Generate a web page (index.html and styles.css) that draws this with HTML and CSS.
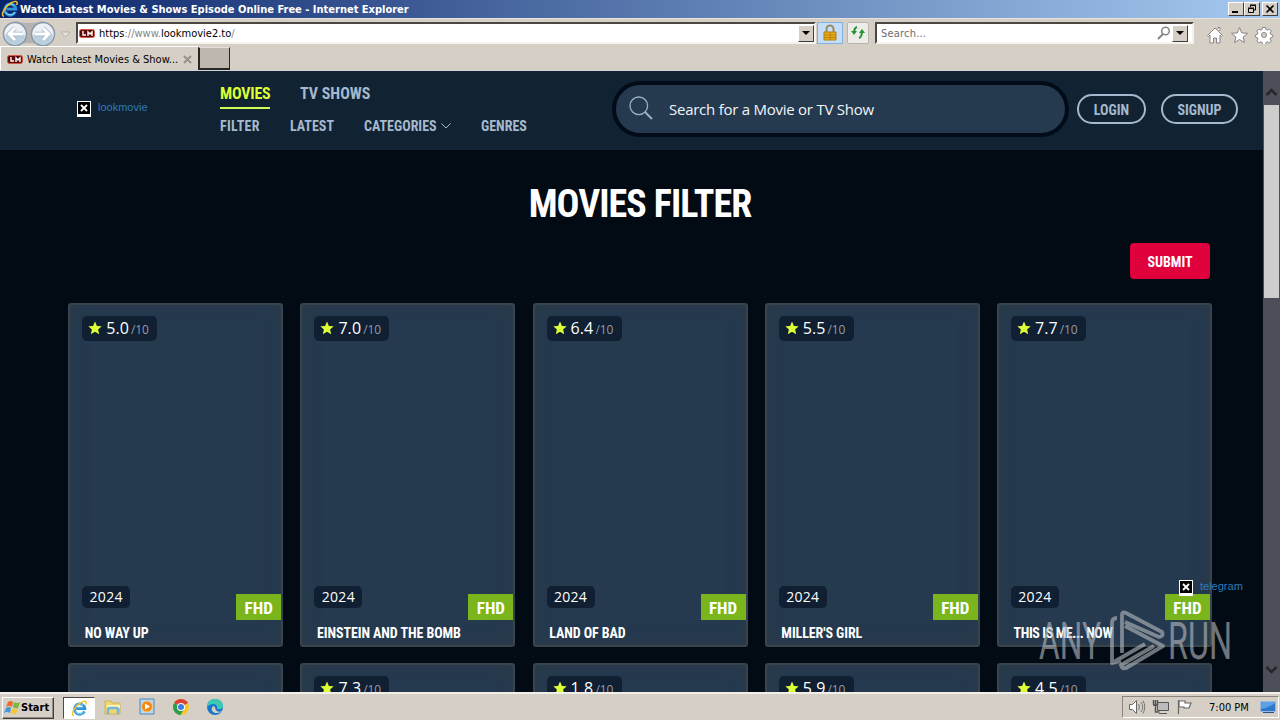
FILE: index.html
```
<!DOCTYPE html>
<html lang="en">
<head>
    <meta charset="UTF-8">
    <meta name="viewport" content="width=device-width, initial-scale=1.0">
    <title>Watch Latest Movies &amp; Shows Episode Online Free</title>
    <link rel="stylesheet" href="styles.css">
</head>
<body>
    <!-- shared icons -->
    <svg class="defs">
        <symbol id="ie" viewBox="0 0 18 18">
            <path d="M14.3 12A5.600 5.600 0 1 1 14.800 9.200H5.500" fill="none" stroke="#2f95dc" stroke-width="2.800"/>
            <path d="M13.800 12A5.200 5.200 0 0 1 4.500 12M5 6.500a5 5 0 0 1 8-1" fill="none" stroke="#8fe0fa"/>
            <path d="M3 16.500C-1 15.500 3.500 7 10 3c5-3 7.500-1.500 5.500 2" fill="none" stroke="#f0c32c" stroke-width="1.500"/>
        </symbol>
        <symbol id="lm" viewBox="0 0 16 9">
            <rect x=".5" y=".5" width="15" height="8" rx="2" fill="#5b0b0b" stroke="#d5573e"/>
            <path d="M4 2v4h3M9 7V3l2 2 2-2v4" fill="none" stroke="#fff" stroke-width="1.4"/>
        </symbol>
        <symbol id="star" viewBox="0 0 14 14">
            <path d="M7 .4l1.9 4.5 4.8.4-3.6 3.2 1.1 4.8L7 10.8l-4.2 2.5 1.1-4.8L.3 5.3l4.8-.4z" fill="#dcff36"/>
        </symbol>
        <symbol id="broken" viewBox="0 0 14 16">
            <path d="M0 0h14v16H0z" fill="#fff"/><path d="M1 1h12v12H1z" fill="#000"/>
            <path d="M4 4l6 6M10 4l-6 6" stroke="#fff" stroke-width="1.8"/>
        </symbol>
    </svg>

    <div class="titlebar">
        <svg class="title-icon"><use href="#ie"/></svg>
        <span class="title-text">Watch Latest Movies &amp; Shows Episode Online Free - Internet Explorer</span>
        <div class="window-buttons">
            <span class="win"><svg viewBox="0 0 14 12"><path d="M3 9h6" stroke="#000" stroke-width="2"/></svg></span>
            <span class="win"><svg viewBox="0 0 14 12"><path d="M5.500 4V2.500h5v4.500H9M3.500 5.500h5v4h-5zM5 2h6M3 5h6" fill="none" stroke="#000"/></svg></span>
            <span class="win close"><svg viewBox="0 0 14 12"><path d="M3.500 2.500l7 7M10.500 2.500l-7 7" stroke="#000" stroke-width="1.700"/></svg></span>
        </div>
    </div>

    <div class="toolbar">
        <svg class="nav-buttons" viewBox="0 0 72 28">
            <path d="M15 2q13 4 28 0v24q-14-4-28 0z" fill="#b5b3b2"/>
            <g fill="#edf1f5" stroke="#8897a6" stroke-width="1.500"><circle cx="15" cy="15" r="11.500"/><circle cx="43" cy="15" r="11.500"/></g>
            <g fill="#b9cfe0"><path d="M5 16a10 10 0 0 0 20 0q-10-4-20 0z"/><path d="M33 16a10 10 0 0 0 20 0q-10-4-20 0z"/></g>
            <g fill="none" stroke="#a2b3c3" stroke-width="4.500"><path d="M23 15H9M15 9l-6 6 6 6M35 15h14M43 9l6 6-6 6"/></g>
            <g fill="none" stroke="#fff" stroke-width="3"><path d="M23 15H9M15 9l-6 6 6 6M35 15h14M43 9l6 6-6 6"/></g>
            <path d="M61 13h9l-4.500 5z" fill="#e6e2dc" stroke="#b7b2ab"/>
        </svg>
        <div class="address">
            <svg class="favicon"><use href="#lm"/></svg>
            <span class="url">https<i>://www.</i>lookmovie2.to<i>/</i></span>
            <span class="drop"></span>
        </div>
        <div class="lock"><svg viewBox="0 0 16 18"><path d="M4.500 9V5a3.500 3.500 0 0 1 7 0v4" fill="none" stroke="#9b8a68" stroke-width="2"/><path d="M2 8h12v8H2z" fill="#e9ad1c" stroke="#b57c0b"/><path d="M2 11h12M2 13.500h12M8 8v8" stroke="#bb8010"/></svg></div>
        <div class="refresh"><svg viewBox="0 0 16 16"><path d="M7 2q-3 1-3 6M9 13q3-1 3-7" fill="none" stroke="#269332" stroke-width="2"/><path d="M1 6h6l-3 4zM9 8h6l-3-4z" fill="#269332"/></svg></div>
        <div class="search-box">
            <span>Search...</span>
            <svg viewBox="0 0 14 14"><circle cx="8.500" cy="5" r="3.800" fill="none" stroke="#858585" stroke-width="1.500"/><path d="M6 8l-5 5" stroke="#858585" stroke-width="2"/></svg>
            <span class="drop"></span>
        </div>
        <svg class="commands" viewBox="0 0 68 18" fill="#fff" stroke="#858585">
            <path d="M1.500 9.500L9 2l7.500 7.500-1 1-1.500-1.500V17H10.500v-5h-3v5H4V9l-1.500 1.500zM12 3V1.500h2V5"/>
            <path d="M33.500 1.500l2.200 5.400 5.800.4-4.400 3.700 1.400 5.600-5-3.100-5 3.100 1.400-5.600-4.400-3.700 5.800-.4z"/>
            <g transform="translate(58 9)"><path d="M-1.500-7.500h3l.5 2 1.500.7 1.900-1.100 1.900 1.900-1.100 1.900.6 1.500 2 .6v2l-2 .6-.6 1.500 1.100 1.900-1.900 1.900-1.900-1.100-1.400.7-.5 2h-3l-.5-2-1.500-.7-1.900 1.100-1.900-1.900 1.100-1.900-.6-1.500-2-.6V0l2-.6.6-1.500L-7.200-4l1.900-1.900 1.900 1.100 1.400-.7z"/><circle r="2.500" fill="#d6cfc6"/></g>
        </svg>
    </div>

    <div class="tabs">
        <div class="tab">
            <svg class="favicon"><use href="#lm"/></svg>
            <span>Watch Latest Movies &amp; Show...</span>
            <svg class="tab-close" viewBox="0 0 9 9"><path d="M1 1l7 7M8 1L1 8" stroke="#96918b" stroke-width="2"/></svg>
        </div>
        <div class="new-tab"></div>
    </div>

    <div class="viewport">
        <div class="site">
            <header>
                <a class="logo"><svg><use href="#broken"/></svg>lookmovie</a>
                <nav>
                    <div class="menu-main">
                        <a class="active">MOVIES</a>
                        <a class="tv">TV SHOWS</a>
                    </div>
                    <div class="menu-sub">
                        <a class="m1">FILTER</a>
                        <a class="m2">LATEST</a>
                        <a class="m3">CATEGORIES</a>
                        <svg viewBox="0 0 10 6"><path d="M.5.5L5 5 9.500.5" fill="none" stroke="#a5b9ce"/></svg>
                        <a class="m4">GENRES</a>
                    </div>
                </nav>
                <div class="search">
                    <svg viewBox="0 0 24 24" fill="none" stroke="#9db0c6"><circle cx="9.800" cy="9.800" r="8.800" stroke-width="1.300"/><path d="M16 16l7 7" stroke-width="2"/></svg>
                    <span>Search for a Movie or TV Show</span>
                </div>
                <a class="pill login">LOGIN</a>
                <a class="pill signup">SIGNUP</a>
            </header>

            <main>
                <h1><span>MOVIES FILTER</span></h1>
                <div class="actions"><button>SUBMIT</button></div>
                <div class="movies">
                    <div class="card">
                        <div class="rate"><svg><use href="#star"/></svg><b>5.0</b><small>/10</small></div>
                        <div class="year">2024</div>
                        <div class="quality">FHD</div>
                        <h6>NO WAY UP</h6>
                    </div>
                    <div class="card">
                        <div class="rate"><svg><use href="#star"/></svg><b>7.0</b><small>/10</small></div>
                        <div class="year">2024</div>
                        <div class="quality">FHD</div>
                        <h6>EINSTEIN AND THE BOMB</h6>
                    </div>
                    <div class="card">
                        <div class="rate"><svg><use href="#star"/></svg><b>6.4</b><small>/10</small></div>
                        <div class="year">2024</div>
                        <div class="quality">FHD</div>
                        <h6>LAND OF BAD</h6>
                    </div>
                    <div class="card">
                        <div class="rate"><svg><use href="#star"/></svg><b>5.5</b><small>/10</small></div>
                        <div class="year">2024</div>
                        <div class="quality">FHD</div>
                        <h6>MILLER'S GIRL</h6>
                    </div>
                    <div class="card">
                        <div class="rate"><svg><use href="#star"/></svg><b>7.7</b><small>/10</small></div>
                        <div class="year">2024</div>
                        <div class="quality">FHD</div>
                        <h6>THIS IS ME... NOW</h6>
                    </div>
                    <div class="card"></div>
                    <div class="card"><div class="rate"><svg><use href="#star"/></svg><b>7.3</b><small>/10</small></div></div>
                    <div class="card"><div class="rate"><svg><use href="#star"/></svg><b>1.8</b><small>/10</small></div></div>
                    <div class="card"><div class="rate"><svg><use href="#star"/></svg><b>5.9</b><small>/10</small></div></div>
                    <div class="card"><div class="rate"><svg><use href="#star"/></svg><b>4.5</b><small>/10</small></div></div>
                </div>
            </main>
            <a class="telegram"><svg><use href="#broken"/></svg>telegram</a>
        </div>
        <div class="scrollbar">
            <svg viewBox="0 0 17 34"><path d="M3.500 24l5-5 5 5" fill="none" stroke="#25272c" stroke-width="2.500"/></svg>
            <div class="thumb"></div>
            <svg class="down" viewBox="0 0 17 34"><path d="M3.500 9l5 5 5-5" fill="none" stroke="#25272c" stroke-width="2.500"/></svg>
        </div>
    </div>

    <div class="taskbar">
        <div class="start">
            <svg viewBox="0 0 17 16"><path d="M4 2q3-2 5 0L8 7Q5 5 2 7z" fill="#ed6b30"/><path d="M10 2q3 2 6 0l-2 6q-3 1-5-1z" fill="#79b943"/><path d="M2 8q3-2 5 0l-1 5q-3-2-6 0z" fill="#4397db"/><path d="M8 8q3 2 6 1l-2 5q-3 1-5-1z" fill="#f6c53b"/></svg>
            Start
        </div>
        <div class="task-ie"><svg><use href="#ie"/></svg></div>
        <svg class="folder" viewBox="0 0 18 18"><path d="M1 3h6l1 2h8v11H1z" fill="#f3d674" stroke="#cfb057"/><path d="M3 7h13v3H3z" fill="#fff3b5"/><path d="M4 16v-4q0-2 2-2h6q2 0 2 2v4" fill="none" stroke="#70bad9" stroke-width="2.500"/></svg>
        <svg class="player" viewBox="0 0 18 18"><path d="M2 1h14v15H2z" fill="#b5d9f3" stroke="#4b87bd"/><circle cx="9" cy="8.500" r="5.500" fill="#f28a17" stroke="#f9c780"/><path d="M7 5.500l5 3-5 3z" fill="#fff"/></svg>
        <svg class="chrome" viewBox="0 0 18 18"><circle cx="9" cy="9" r="8" fill="#f5c82a"/><path d="M9 9L2.100 5a8 8 0 0 1 13.800 0z" fill="#dd4034"/><path d="M2.100 5A8 8 0 0 0 8.500 17l3.500-6z" fill="#2e9c4d"/><circle cx="9" cy="9" r="4" fill="#fff"/><circle cx="9" cy="9" r="3" fill="#3e7de0"/></svg>
        <svg class="edge" viewBox="0 0 18 18"><circle cx="9" cy="9" r="8" fill="#1876c9"/><path d="M1 9C1-2 17-1 17 8c0 4-6 4-6 2 1-5-6-5-10-1z" fill="#3dc8b4"/><path d="M7 8c-4 5 2 9 8 6l1-1c-3 2-7 0-7-4z" fill="#d6cfc6"/></svg>
        <div class="tray">
            <svg class="sound" viewBox="0 0 18 16"><path d="M1.500 5.500h3l4-4v13l-4-4h-3z" fill="#fff" stroke="#666"/><path d="M10.500 5q2 3 0 6M13 3q3.500 5 0 10M15 1.500q3.500 6.500 0 13" fill="none" stroke="#777"/></svg>
            <svg class="network" viewBox="0 0 18 16"><path d="M5.500 3.500h11v8h-11zM7 14.500h8" fill="#bbb" stroke="#555"/><path d="M1.500 1v4q0 1.500 2 1.500t2-1.500V1M3.500 1v12h4" fill="none" stroke="#555" stroke-width="1.500"/></svg>
            <svg class="flag" viewBox="0 0 18 16"><path d="M2.500 1v14M3 2h6v2h6l-2 5H8V8H3z" fill="#fff" stroke="#666" stroke-width="1.200"/></svg>
            <span>7:00 PM</span>
            <svg class="desktop" viewBox="0 0 16 14"><path d="M.5 1.500h15v10H.5z" fill="#2e76cd" stroke="#9bb9dd"/><path d="M1 9q7-1 14-6V2H1z" fill="#5ca0e5"/><path d="M3 12.500h11" stroke="#244f87"/></svg>
        </div>
    </div>

    <svg class="watermark" viewBox="0 0 200 66">
        <text x="4" y="51" textLength="62" lengthAdjust="spacingAndGlyphs">ANY</text>
        <text x="133" y="51" textLength="64" lengthAdjust="spacingAndGlyphs">RUN</text>
        <path d="M82 10q-5 0-5 5v40l33-19M87 45V7q0-4 4-2l36 19q2 4-3 5L90 14M90 18l38 20-37 22q-4 1-5-3l33-19M77 55l9-2" fill="none" stroke="#b9bdc2" stroke-width="3.800" stroke-linejoin="round"/>
    </svg>
</body>
</html>
```
FILE: styles.css
```
* {
    box-sizing: border-box;
}
body {
    margin: 0;
    width: 1280px;
    height: 720px;
    overflow: hidden;
    position: relative;
    display: flex;
    flex-direction: column;
    background: #d6cfc6;
    font-family: "DejaVu Sans Condensed", "DejaVu Sans", sans-serif;
    font-stretch: condensed;
    font-size: 11px;
}
svg {
    display: block;
    flex-shrink: 0;
}
.defs {
    display: none;
}
.titlebar {
    height: 18px;
    display: flex;
    align-items: center;
    background: linear-gradient(to right, #0a246a, #a6caf0);
    color: #fff;
    font-weight: bold;
}
.title-icon {
    width: 18px;
    height: 18px;
    margin-left: 1px;
}
.title-text {
    margin-left: 1px;
}
.window-buttons {
    margin-left: auto;
    margin-right: 2px;
    display: flex;
}
.win {
    width: 16px;
    height: 14px;
    background: #d6cfc6;
    border: 1px solid;
    border-color: #fff #404040 #404040 #fff;
}
.close {
    margin-left: 2px;
}
.toolbar {
    height: 28px;
    display: flex;
    align-items: center;
    border-top: 1px solid #e7e2dc;
}
.nav-buttons {
    width: 72px;
    height: 28px;
}
.address, .search-box {
    height: 22px;
    margin-top: 1px;
    background: #fff;
    border: 2px solid;
    border-color: #4c4743 #f6f3ef #f6f3ef #4c4743;
    display: flex;
    align-items: center;
}
.address {
    width: 740px;
    margin-left: 4px;
}
.favicon {
    width: 16px;
    height: 9px;
}
.address .favicon {
    margin-left: 1px;
}
.url {
    margin-left: 4px;
}
.url i {
    font-style: normal;
    color: #858585;
}
.drop {
    margin-left: auto;
    width: 16px;
    height: 17px;
    background: #d6cfc6;
    border: 1px solid;
    border-color: #fff #404040 #404040 #fff;
    display: flex;
    align-items: center;
    justify-content: center;
}
.drop::after {
    content: "";
    border: 4px solid transparent;
    border-top-color: #000;
    border-bottom: 0;
}
.lock {
    width: 26px;
    height: 22px;
    margin-left: 1px;
    padding: 1px 4px;
    background: #c5def7;
    border: 1px solid #83b1df;
}
.refresh {
    width: 22px;
    height: 22px;
    margin-left: 4px;
    padding: 2px;
    background: #eeece9;
    border: 1px solid #b8b5b0;
    border-radius: 2px;
}
.search-box {
    width: 319px;
    margin-left: 6px;
    padding-right: 4px;
    color: #6d6d6d;
}
.search-box > span:first-child {
    margin-left: 4px;
    letter-spacing: .2px;
}
.search-box svg {
    width: 14px;
    height: 14px;
    margin-left: auto;
}
.search-box .drop {
    margin-left: 1px;
}
.commands {
    width: 68px;
    height: 18px;
    margin-left: 12px;
    margin-top: 4px;
}
.tabs {
    height: 25px;
    display: flex;
    border-bottom: 1px solid #d0d5d9;
}
.tab {
    width: 198px;
    padding: 2px 0 0 6px;
    display: flex;
    align-items: center;
    border-top: 1px solid #fff;
    border-left: 1px solid #fff;
}
.tab span {
    margin-left: 4px;
}
.tab-close {
    width: 9px;
    height: 9px;
    margin-left: 5px;
}
.new-tab {
    width: 32px;
    height: 23px;
    margin-top: 1px;
    background: #beb7b0;
    border: 1px solid #292724;
    border-width: 1px 1px 2px 2px;
    border-top-color: #e5e0da;
}
.viewport {
    height: 621px;
    display: flex;
    overflow: hidden;
}
.site {
    width: 1263px;
    position: relative;
    background: #020a14;
    font-family: "Liberation Sans Narrow", "Roboto Condensed", Roboto, sans-serif;
}
header {
    height: 79px;
    display: flex;
    align-items: center;
    background: #112232;
    color: #a5b9ce;
    font-weight: bold;
}
.logo, .telegram {
    display: flex;
    align-items: center;
    color: #2e7bb8;
    font: 11px "Liberation Sans", sans-serif;
}
.logo {
    width: 143px;
    margin-left: 77px;
    margin-bottom: 7px;
}
.logo svg, .telegram svg {
    width: 14px;
    height: 16px;
    margin-right: 7px;
    margin-top: 3px;
}
nav {
    width: 392px;
    height: 79px;
}
.menu-main {
    height: 38px;
    padding-top: 10px;
    display: flex;
    font-size: 16px;
    line-height: 25px;
}
.active {
    width: 50px;
    margin-right: 30px;
    height: 28px;
    color: #dcff36;
    border-bottom: 2px solid #d3fb55;
    letter-spacing: -.2px;
}
.menu-sub {
    display: flex;
    align-items: center;
    height: 34px;
    font-size: 14px;
}
.m1 {
    width: 70px;
    letter-spacing: .3px;
}
.m2 {
    width: 74px;
}
.m3 {
    width: 77px;
}
.menu-sub svg {
    width: 10px;
    height: 6px;
    margin-right: 30px;
}
.search {
    width: 457px;
    height: 56px;
    display: flex;
    align-items: center;
    margin-bottom: 3px;
    padding-left: 13px;
    background: #25394f;
    border: 4px solid #020c18;
    border-radius: 28px;
    color: #f0f5fa;
    font: 500 15px "Open Sans", sans-serif;
    letter-spacing: -.25px;
}
.search svg {
    width: 24px;
    height: 24px;
    margin: 0 16px 3px 0;
}
.pill {
    height: 30px;
    margin-bottom: 4px;
    border: 2px solid #a5b9ce;
    border-radius: 15px;
    font-size: 14px;
    line-height: 28px;
    text-align: center;
}
.login {
    width: 69px;
    margin-left: 8px;
}
.signup {
    width: 77px;
    margin-left: 15px;
}
h1 {
    margin: 30px 0 0;
    padding-left: 17px;
    text-align: center;
    color: #fff;
    font-size: 38px;
    line-height: 48px;
    letter-spacing: -.9px;
}
.actions {
    display: flex;
    justify-content: flex-end;
    margin: 15px 53px 24px 0;
}
button {
    width: 80px;
    height: 36px;
    padding: 2px 0 0;
    background: #e0003c;
    color: #fff;
    border: 0;
    border-radius: 4px;
    font: bold 14px "Liberation Sans Narrow", "Roboto Condensed", Roboto, sans-serif;
    font-stretch: condensed;
}
.movies {
    display: grid;
    grid-template-columns: repeat(5, 215px);
    grid-auto-rows: 344px;
    gap: 16px 17.200px;
    padding-left: 68.200px;
}
.card {
    position: relative;
    padding: 11px 0 0 12px;
    background: #25394f;
    border: 2px solid #38434b;
    border-radius: 3px;
    box-shadow: inset 0 0 18px #2b3c48;
    color: #fff;
}
.rate {
    display: flex;
    align-items: center;
    width: 75px;
    height: 25px;
    padding-left: 6px;
    background: #101f31;
    border-radius: 5px;
    font-family: "Open Sans", sans-serif;
    font-stretch: normal;
}
.rate svg {
    width: 14px;
    height: 14px;
    margin-bottom: 1px;
}
.rate b {
    margin: 0 0 1px 4px;
    font-size: 16px;
    font-weight: 500;
    letter-spacing: .1px;
}
.rate small {
    margin: 1px 0 0 2px;
    font-size: 12px;
    letter-spacing: -.1px;
    color: #929dab;
}
.year {
    width: 48px;
    height: 22px;
    margin-top: 245px;
    background: #101f31;
    border-radius: 5px;
    font: 14px/22px "Open Sans", sans-serif;
    letter-spacing: .3px;
    text-align: center;
}
/* sits on the card's right edge */
.quality {
    position: absolute;
    right: 0;
    bottom: 25px;
    width: 45px;
    height: 26px;
    background: #7ab51d;
    font-size: 17px;
    font-weight: bold;
    line-height: 28px;
    text-align: center;
}
h6 {
    margin: 15px 0 0 2.600px;
    font-size: 14px;
    line-height: 20px;
    letter-spacing: -.08px;
    white-space: nowrap;
}
.card:nth-child(5) h6 {
    letter-spacing: -.4px;
}
.telegram {
    position: absolute;
    left: 1179px;
    top: 504px;
}
.telegram svg {
    margin-top: 5px;
}
.scrollbar {
    width: 17px;
    background: #4c4f57;
    display: flex;
    flex-direction: column;
}
.scrollbar svg {
    width: 17px;
    height: 34px;
}
.thumb {
    height: 193px;
    margin: 0 1px;
    background: #cdcdcd;
}
.scrollbar .down {
    margin-top: auto;
}
.taskbar {
    height: 28px;
    border-top: 2px solid #f2efeb;
    display: flex;
    align-items: center;
}
.start {
    width: 52px;
    height: 22px;
    margin: 1px 9px 0 2px;
    padding-left: 1px;
    display: flex;
    align-items: center;
    border: 1px solid;
    border-color: #fff #404040 #404040 #fff;
    box-shadow: inset -1px -1px #918b84;
    font-weight: bold;
}
.start svg {
    width: 17px;
    height: 16px;
}
.task-ie {
    width: 32px;
    height: 22px;
    margin-top: 1px;
    padding: 2px 7px;
    background: #fff;
    border: 1px solid #4d4843;
    border-right-color: #fff;
    border-bottom-color: #fff;
}
.task-ie svg {
    width: 17px;
    height: 17px;
}
.folder, .player, .chrome, .edge {
    width: 18px;
    height: 18px;
    margin-left: 16px;
}
.folder {
    margin-left: 9px;
}
.tray {
    width: 157px;
    height: 22px;
    margin-left: auto;
    margin-right: 1px;
    padding-left: 5px;
    display: flex;
    align-items: center;
    border: 1px solid;
    border-color: #8c857d #fff #fff #8c857d;
}
.tray svg {
    width: 18px;
    height: 16px;
    margin-right: 6px;
}
.tray span {
    margin-left: 9px;
    white-space: nowrap;
}
.tray .desktop {
    width: 16px;
    height: 14px;
    margin: 0 2px 0 auto;
}
.watermark {
    position: absolute;
    left: 1035px;
    top: 608px;
    width: 200px;
    height: 66px;
    opacity: .6;
    font: 400 51px Roboto, sans-serif;
    fill: #b9bdc2;
}
```
